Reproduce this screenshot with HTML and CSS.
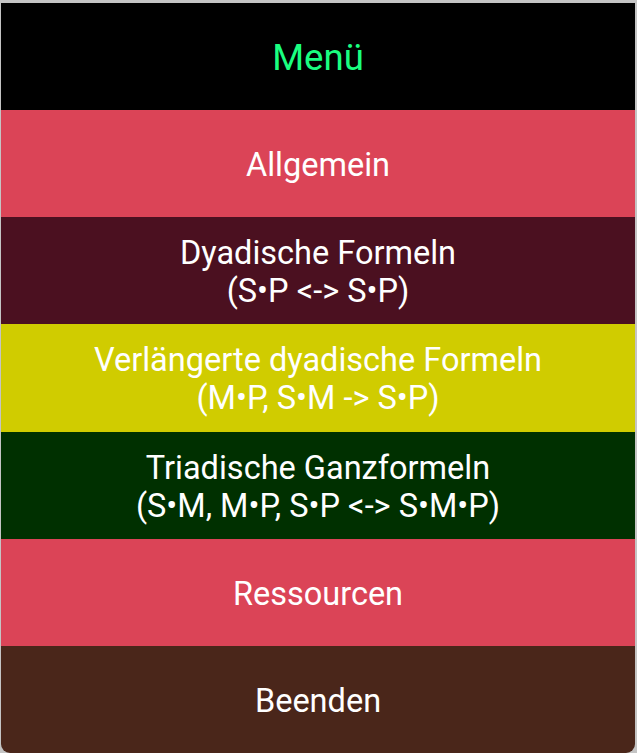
FILE: index.html
```html
<!DOCTYPE html>
<html lang="de">
<head>
<meta charset="utf-8">
<title>Menü</title>
<link rel="stylesheet" href="styles.css">
</head>
<body>
<div class="panel">
  <div class="row title">Menü</div>
  <div class="row red">Allgemein</div>
  <div class="row maroon">Dyadische Formeln<br>(S•P &lt;-&gt; S•P)</div>
  <div class="row yellow">Verlängerte dyadische Formeln<br>(M•P, S•M -&gt; S•P)</div>
  <div class="row green">Triadische Ganzformeln<br>(S•M, M•P, S•P &lt;-&gt; S•M•P)</div>
  <div class="row red">Ressourcen</div>
  <div class="row brown">Beenden</div>
</div>
</body>
</html>
```
FILE: styles.css
```css
html, body {
  margin: 0;
  padding: 0;
  background: #c4c4c4;
}
body {
  padding: 3px 2px 0 1px;
  height: 753px;
  box-sizing: border-box;
  overflow: hidden;
}
.panel {
  display: flex;
  flex-direction: column;
  height: 750px;
  border-radius: 0 0 9px 9px;
  overflow: hidden;
  font-family: Roboto, "Liberation Sans", sans-serif;
  font-size: 32.5px;
  line-height: 38px;
  color: #ffffff;
}
.row {
  flex: 1 1 0;
  display: flex;
  align-items: center;
  justify-content: center;
  text-align: center;
  padding-top: 3px;
}
.title { background: #000000; color: #1aff80; font-size: 36.5px; }
.red { background: #db4457; }
.maroon { background: #4b1020; }
.yellow { background: #d0cc00; }
.green { background: #003000; }
.brown { background: #4a261a; }
```
